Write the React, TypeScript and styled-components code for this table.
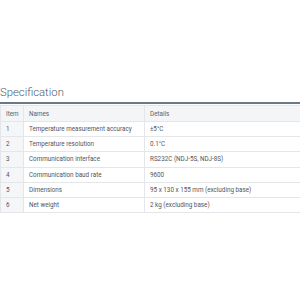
import styled, { createGlobalStyle } from 'styled-components'

const GlobalStyle = createGlobalStyle`
  html, body {
    margin: 0;
    padding: 0;
    background: #ffffff;
    overflow: hidden;
  }
  body {
    font-family: Roboto, "Liberation Sans", Arial, sans-serif;
  }
`

const specs = [
  { id: 1, name: 'Temperature measurement accuracy', detail: '±5°C' },
  { id: 2, name: 'Temperature resolution', detail: '0.1°C' },
  { id: 3, name: 'Communication interface', detail: 'RS232C (NDJ-5S, NDJ-8S)' },
  { id: 4, name: 'Communication baud rate', detail: '9600' },
  { id: 5, name: 'Dimensions', detail: '95 x 130 x 155 mm (excluding base)' },
  { id: 6, name: 'Net weight', detail: '2 kg (excluding base)' },
]

const Section = styled.section`
  width: 312px;
  padding-top: 85px;
`

const Title = styled.h2`
  margin: 0;
  padding: 0 0 2px 0;
  font-size: 11.3px;
  font-weight: 300;
  line-height: 15px;
  color: #4b5a70;
  border-bottom: 2px solid #6a788c;
`

const Table = styled.table`
  width: 100%;
  margin-top: 1px;
  border-collapse: collapse;
  box-shadow: 0 2px 3px rgba(0, 0, 0, 0.12);
  font-size: 6.3px;
  color: #50565e;
`

const Cell = styled.td<{ $shade?: boolean }>`
  height: 15.2px;
  padding: 0 0 0 5px;
  box-sizing: border-box;
  border: 1px solid #e4e6ea;
  background: ${(p) => (p.$shade ? '#f5f6f8' : '#ffffff')};
  text-align: left;
  vertical-align: middle;
  white-space: nowrap;
`

const HeadCell = styled(Cell).attrs({ as: 'th' })`
  height: 16px;
  font-weight: 400;
  background: #f4f5f7;
  color: #5c626a;
`

export default function App() {
  return (
    <>
      <GlobalStyle />
      <Section>
        <Title>Specification</Title>
        <Table>
          <colgroup>
            <col style={{ width: 23 }} />
            <col style={{ width: 121 }} />
            <col />
          </colgroup>
          <thead>
            <tr>
              <HeadCell>Item</HeadCell>
              <HeadCell>Names</HeadCell>
              <HeadCell>Details</HeadCell>
            </tr>
          </thead>
          <tbody>
            {specs.map((s) => (
              <tr key={s.id}>
                <Cell $shade>{s.id}</Cell>
                <Cell>{s.name}</Cell>
                <Cell>{s.detail}</Cell>
              </tr>
            ))}
          </tbody>
        </Table>
      </Section>
    </>
  )
}
